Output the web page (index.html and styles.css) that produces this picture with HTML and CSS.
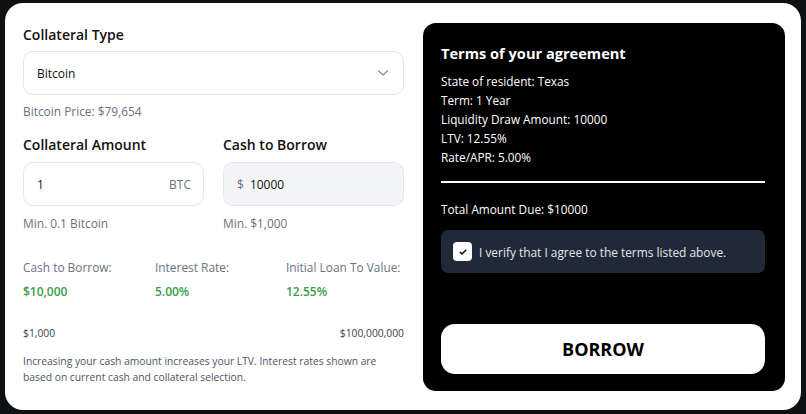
FILE: index.html
```html
<!DOCTYPE html>
<html>
<head>
<meta charset="utf-8">
<link rel="stylesheet" href="styles.css">
</head>
<body>
<div class="card">
  <div class="left">
    <div class="heading">Collateral Type</div>
    <div class="select">
      <span>Bitcoin</span>
      <svg class="chev" width="12" height="8" viewBox="0 0 12 8"><path d="M1.5 1.8 L6 6 L10.5 1.8" fill="none" stroke="#8a8f98" stroke-width="1.3" stroke-linecap="round" stroke-linejoin="round"/></svg>
    </div>
    <div class="muted price">Bitcoin Price: $79,654</div>
    <div class="pair">
      <div class="field">
        <div class="heading">Collateral Amount</div>
        <div class="input">
          <span class="val">1</span>
          <span class="unit">BTC</span>
        </div>
        <div class="muted min">Min. 0.1 Bitcoin</div>
      </div>
      <div class="field">
        <div class="heading">Cash to Borrow</div>
        <div class="input filled">
          <span class="cur">$</span>
          <span class="val">10000</span>
        </div>
        <div class="muted min">Min. $1,000</div>
      </div>
    </div>
    <div class="stats">
      <div class="stat"><div class="muted">Cash to Borrow:</div><div class="green">$10,000</div></div>
      <div class="stat"><div class="muted">Interest Rate:</div><div class="green">5.00%</div></div>
      <div class="stat"><div class="muted">Initial Loan To Value:</div><div class="green">12.55%</div></div>
    </div>
    <div class="range">
      <span>$1,000</span>
      <span>$100,000,000</span>
    </div>
    <p class="note">Increasing your cash amount increases your LTV. Interest rates shown are based on current cash and collateral selection.</p>
  </div>
  <div class="panel">
    <div class="ptitle">Terms of your agreement</div>
    <div class="terms">
      <div>State of resident: Texas</div>
      <div>Term: 1 Year</div>
      <div>Liquidity Draw Amount: 10000</div>
      <div>LTV: 12.55%</div>
      <div>Rate/APR: 5.00%</div>
    </div>
    <div class="rule"></div>
    <div class="total">Total Amount Due: $10000</div>
    <div class="verify">
      <span class="box"><svg width="10" height="8" viewBox="0 0 10 8"><path d="M2.2 4.3 L4 5.9 L7.8 2.2" fill="none" stroke="#111" stroke-width="1.5" stroke-linecap="round" stroke-linejoin="round"/></svg></span>
      <span>I verify that I agree to the terms listed above.</span>
    </div>
    <button class="borrow">BORROW</button>
  </div>
</div>
</body>
</html>
```
FILE: styles.css
```css
* { box-sizing: border-box; }
html, body { margin: 0; padding: 0; }
body {
  width: 806px;
  height: 414px;
  overflow: hidden;
  background: #0e1011;
  background-image:
    linear-gradient(115deg, rgba(60,80,80,0.12) 1px, transparent 1px),
    linear-gradient(25deg, rgba(60,80,80,0.10) 1px, transparent 1px);
  background-size: 44px 44px, 60px 60px;
  font-family: "Open Sans", "Noto Sans", sans-serif;
  padding: 3px 0 0 5px;
}
.card {
  width: 796px;
  height: 407px;
  background: #fff;
  border-radius: 18px;
  display: flex;
  padding: 20px 15px 19px 18px;
  gap: 19px;
}
.left {
  width: 381px;
  display: flex;
  flex-direction: column;
}
.left > *, .panel > * { flex-shrink: 0; }
.heading {
  font-size: 14px;
  font-weight: 600;
  line-height: 24px;
  color: #111;
}
.select {
  margin-top: 4px;
  height: 44px;
  border: 1px solid #e5e7eb;
  border-radius: 10px;
  display: flex;
  align-items: center;
  justify-content: space-between;
  padding: 0 14px 0 13px;
  font-size: 12px;
  color: #111;
}
.muted { color: #6b7280; font-size: 11.9px; line-height: 20px; }
.price { margin-top: 6px; }
.pair {
  margin-top: 12px;
  display: flex;
  gap: 19px;
}
.field { flex: 1; }
.input {
  margin-top: 5px;
  height: 44px;
  border: 1px solid #e5e7eb;
  border-radius: 10px;
  display: flex;
  align-items: center;
  padding: 0 12px 0 13px;
  font-size: 12px;
  color: #111;
}
.input .val { flex: 1; }
.input .unit { color: #6b7280; }
.input.filled { background: #f3f4f6; }
.input .cur { color: #6b7280; margin-right: 6px; flex: none; }
.min { margin-top: 7px; }
.stats {
  margin-top: 24px;
  display: grid;
  grid-template-columns: 132px 131px 1fr;
}
.stat .green {
  margin-top: 5px;
  color: #36a048;
  font-size: 12px;
  font-weight: 600;
  line-height: 20px;
}
.range {
  margin-top: 22px;
  display: flex;
  justify-content: space-between;
  font-size: 10.3px;
  line-height: 18px;
  color: #374151;
}
.note {
  margin: 11px 0 0;
  width: 362px;
  font-size: 10.3px;
  line-height: 16px;
  color: #4b5563;
}
.panel {
  width: 362px;
  background: #000;
  border-radius: 13px;
  padding: 18px 20px 16px 18px;
  display: flex;
  flex-direction: column;
  color: #fff;
}
.ptitle {
  font-size: 14.6px;
  font-weight: 700;
  line-height: 24px;
}
.terms {
  margin-top: 7px;
  font-size: 11.8px;
  line-height: 19px;
}
.rule {
  margin-top: 14px;
  height: 2px;
  background: #fff;
}
.total {
  margin-top: 16px;
  font-size: 11.8px;
  line-height: 20px;
}
.verify {
  margin-top: 11px;
  height: 43px;
  background: #1f2937;
  border-radius: 7px;
  display: flex;
  align-items: center;
  padding: 0 12px;
  gap: 7px;
  font-size: 11.9px;
  color: #e5e7eb;
}
.box {
  width: 19px;
  height: 19px;
  background: #fff;
  border-radius: 4px;
  display: flex;
  align-items: center;
  justify-content: center;
}
.borrow {
  margin-top: 51px;
  height: 50px;
  border: none;
  background: #fff;
  border-radius: 14px;
  font-family: "Open Sans", "Noto Sans", sans-serif;
  font-size: 18px;
  font-weight: 700;
  color: #000;
}
```
